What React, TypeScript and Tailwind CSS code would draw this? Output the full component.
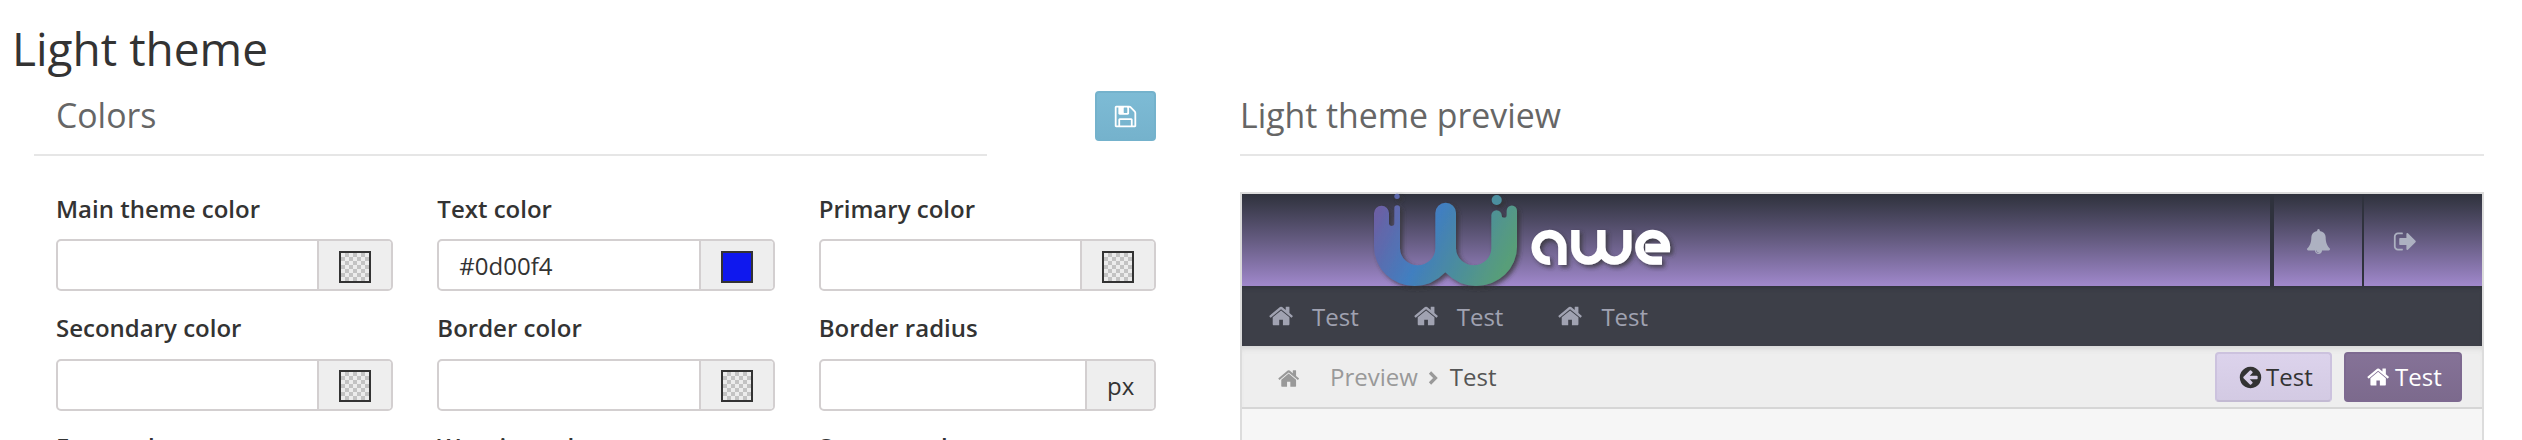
import React from "react";

const icons = {
  home: "M1408 992v480q0 26-19 45t-45 19h-384v-384h-256v384h-384q-26 0-45-19t-19-45v-480q0-1 .5-3t.5-3l575-474 575 474q1 2 1 6zm223-69l-62 74q-8 9-21 11h-3q-13 0-21-7l-692-577-692 577q-12 8-24 7-13-2-21-11l-62-74q-8-10-7-23.5t11-21.5l719-599q32-26 76-26t76 26l244 204v-195q0-14 9-23t23-9h192q14 0 23 9t9 23v408l219 182q10 8 11 21.5t-7 23.5z",
  bell: "M912 1696q0-16-16-16-59 0-101.5-42.5t-42.5-101.5q0-16-16-16t-16 16q0 73 51.5 124.5t124.5 51.5q16 0 16-16zm816-288q0 52-38 90t-90 38h-448q0 106-75 181t-181 75-181-75-75-181h-448q-52 0-90-38t-38-90q50-42 91-88t85-119.5 74.5-158.5 50-206 19.5-260q0-152 117-282.5t307-158.5q-8-19-8-39 0-40 28-68t68-28 68 28 28 68q0 20-8 39 190 28 307 158.5t117 282.5q0 139 19.5 260t50 206 74.5 158.5 85 119.5 91 88z",
  save: "M512 1536h768v-384h-768v384zm896 0h128v-896q0-14-10-38.5t-20-34.5l-281-281q-10-10-34-20t-39-10v416q0 40-28 68t-68 28h-576q-40 0-68-28t-28-68v-416h-128v1280h128v-416q0-40 28-68t68-28h832q40 0 68 28t28 68v416zm-384-928v-320q0-13-9.5-22.5t-22.5-9.5h-192q-13 0-22.5 9.5t-9.5 22.5v320q0 13 9.5 22.5t22.5 9.5h192q13 0 22.5-9.5t9.5-22.5zm640 32v928q0 40-28 68t-68 28h-1344q-40 0-68-28t-28-68v-1344q0-40 28-68t68-28h928q40 0 88 20t76 48l280 280q28 28 48 76t20 88z",
  signOut: "M704 1440q0 4 1 20t.5 26.5-3 23.5-10 19.5-20.5 6.5h-320q-119 0-203.5-84.5t-84.5-203.5v-704q0-119 84.5-203.5t203.5-84.5h320q13 0 22.5 9.5t9.5 22.5q0 4 1 20t.5 26.5-3 23.5-10 19.5-20.5 6.5h-320q-66 0-113 47t-47 113v704q0 66 47 113t113 47h312l11.5 1 11.5 3 8 5.5 7 9 2 13.5zm928-544q0 26-19 45l-544 544q-19 19-45 19t-45-19-19-45v-288h-448q-26 0-45-19t-19-45v-384q0-26 19-45t45-19h448v-288q0-26 19-45t45-19 45 19l544 544q19 19 19 45z",
  back: "M1408 960v-128q0-26-19-45t-45-19h-502l189-189q19-19 19-45t-19-45l-91-91q-18-18-45-18t-45 18l-362 362-91 91q-18 18-18 45t18 45l91 91 362 362q18 18 45 18t45-18l91-91q18-18 18-45t-18-45l-189-189h502q26 0 45-19t19-45zm256-64q0 209-103 385.5t-279.5 279.5-385.5 103-385.5-103-279.5-279.5-103-385.5 103-385.5 279.5-279.5 385.5-103 385.5 103 279.5 279.5 103 385.5z",
};

function Icon({ name, className }: { name: keyof typeof icons; className: string }) {
  return (
    <svg viewBox="0 0 1792 1792" fill="currentColor" className={`shrink-0 ${className}`}>
      <path d={icons[name]} />
    </svg>
  );
}

function Swatch({ color }: { color?: string }) {
  return (
    <svg width="32" height="32" className="shrink-0">
      <defs>
        <pattern id="checker" x="2" y="2" width="8" height="8" patternUnits="userSpaceOnUse">
          <rect width="8" height="8" fill="#ececec" />
          <rect x="4" width="4" height="4" fill="#c3c3c3" />
          <rect y="4" width="4" height="4" fill="#c3c3c3" />
        </pattern>
      </defs>
      <rect x="1" y="1" width="30" height="30" fill={color ?? "url(#checker)"} stroke="#333" strokeWidth="2" />
    </svg>
  );
}

type FieldProps = { label: string; value?: string; swatch?: string; unit?: string };

function Field({ label, value, swatch, unit }: FieldProps) {
  return (
    <div className="h-[119.2px]">
      <div className="h-[50.35px] text-[24px] leading-[39px] font-semibold text-[#333]">{label}</div>
      <div className="flex h-[52px] overflow-hidden rounded-[5px] border-2 border-[#d3cfd0] bg-white">
        <div className="flex-1 pl-[20px] text-[24px] leading-[49px] text-[#333]">{value}</div>
        {unit ? (
          <div className="w-[69px] border-l-2 border-[#d3cfd0] bg-[#eee] pl-[20px] text-[24px] leading-[50px] text-[#333]">{unit}</div>
        ) : (
          <div className="flex w-[74px] border-l-2 border-[#d3cfd0] bg-[#eee] pt-[9.8px] pl-[20px]">
            <Swatch color={swatch} />
          </div>
        )}
      </div>
    </div>
  );
}

const fields: FieldProps[] = [
  { label: "Main theme color" },
  { label: "Text color", value: "#0d00f4", swatch: "#0f18ee" },
  { label: "Primary color" },
  { label: "Secondary color" },
  { label: "Border color" },
  { label: "Border radius", unit: "px" },
  { label: "Error color" },
  { label: "Warning color" },
  { label: "Success color" },
];

function Logo() {
  return (
    <svg width="340" height="92" viewBox="0 42 1020 276" className="ml-[108px] shrink-0 overflow-visible">
      <defs>
        <linearGradient id="wave" gradientUnits="userSpaceOnUse" x1="70" y1="110" x2="450" y2="290">
          <stop offset="0" stopColor="#6c5fa3" />
          <stop offset="0.42" stopColor="#417fc0" />
          <stop offset="0.5" stopColor="#4482b4" />
          <stop offset="1" stopColor="#589e79" />
        </linearGradient>
        <filter id="shade" x="-10%" y="-10%" width="125%" height="130%">
          <feDropShadow dx="8" dy="8" stdDeviation="6" floodColor="#333" floodOpacity="0.75" />
        </filter>
      </defs>
      <g filter="url(#shade)">
        <path
          fill="url(#wave)"
          d="M72 100a22 22 0 0 1 45 0v30a8 8 0 0 0 16 0V84a8 8 0 0 1 17 0V205a53 51 0 0 0 106 0V99a31 31 0 0 1 62 0V205a53 51 0 0 0 106 0V106a15 15 0 0 1 31 0a7 7 0 0 0 15 0V92a15 15 0 0 1 31 0V200a123 118 0 0 1 -123 118q-52 0 -92 -41q-40 41 -92 41a122 118 0 0 1 -122 -118Z"
        />
        <circle cx="141" cy="49" r="8" fill="#5c68ab" />
        <circle cx="440" cy="60" r="15" fill="#4b8f9f" />
      </g>
      <g filter="url(#shade)" fill="none" stroke="#fff" strokeWidth="25">
        <path d="M600 242a40 40 0 1 1 37 -40V255" />
        <path d="M676 150V202a39 40 0 0 0 78 0V150V202a39 40 0 0 0 78 0V150" />
        <path d="M936 242H910a40 40 0 1 1 38 -38H886" />
      </g>
    </svg>
  );
}

export default function App() {
  return (
    <div className="flex h-[440px] w-[2522px] overflow-hidden bg-white font-['Open_Sans',sans-serif]">
      <section className="w-[1240px] shrink-0">
        <h1 className="h-[91px] pt-[17px] pl-[12px] text-[46px] leading-[63px] text-[#333]">Light theme</h1>
        <div className="flex h-[65px]">
          <h2 className="ml-[34px] w-[953px] border-b-2 border-[#e6e6e6] pl-[22px] text-[33.8px] leading-[48px] text-[#666]">Colors</h2>
          <button className="ml-[108px] flex h-[50px] w-[61px] items-center justify-center rounded-[4px] border-2 border-[#74b2cc] bg-linear-to-b from-[#7dbbd5] to-[#75b2cc] text-white">
            <Icon name="save" className="size-[25px]" />
          </button>
        </div>
        <div className="ml-[56px] grid w-[1100px] grid-cols-3 gap-x-[44px] pt-[33px]">
          {fields.map((f) => (
            <Field key={f.label} {...f} />
          ))}
        </div>
      </section>

      <section className="w-[1244px] shrink-0 pt-[91px]">
        <h2 className="h-[65px] w-[1244px] border-b-2 border-[#e6e6e6] text-[33.8px] leading-[48px] text-[#666]">Light theme preview</h2>
        <div className="mt-[36px] h-[300px] border-2 border-[#dcdcdc] bg-[#f6f6f6]">
          <header className="flex h-[92px] bg-linear-to-b from-[#2f323d] to-[#a088cc]">
            <Logo />
            <div className="ml-auto flex w-[92px] items-center border-l-4 border-[#2f323d] pt-[3px] pl-[32px] text-[#adb1c1]">
              <Icon name="bell" className="size-[25px]" />
            </div>
            <div className="flex w-[120px] items-center border-l-2 border-[#2f323d] pt-[3px] pl-[29px] text-[#adb1c1]">
              <Icon name="signOut" className="size-[25px]" />
            </div>
          </header>
          <nav className="flex h-[60px] bg-[#3d3f48] pl-[27px] text-[24px] text-[#a0a2b1] shadow-[inset_0_4px_4px_-2px_#2f323d]">
            {[0, 1, 2].map((n) => (
              <div key={n} className="flex w-[144.7px] leading-[61px]">
                <Icon name="home" className="mt-[17px] size-[26px]" />
                <span className="ml-[17px]">Test</span>
              </div>
            ))}
          </nav>
          <div className="flex h-[63px] border-b-2 border-[#d6d6d6] bg-[#eee] pl-[36px] text-[24px] leading-[61px] text-[#999] shadow-[inset_0_6px_6px_-4px_#d0d0d0]">
            <Icon name="home" className="mt-[21px] size-[23px]" />
            <span className="ml-[29px]">Preview</span>
            <svg width="10" height="14" viewBox="0 0 10 14" className="mt-[25px] ml-[10px]" fill="none" stroke="currentColor" strokeWidth="3.2">
              <path d="M2 1.5L7.5 7L2 12.5" />
            </svg>
            <span className="ml-[12px] text-[#555]">Test</span>
            <div className="ml-auto flex gap-[12px] pt-[6px] pr-[20px]">
              <button className="flex h-[50px] w-[117px] items-center rounded-[4px] border-2 border-b-[#c3bad3] border-[#ccc2de] bg-linear-to-b from-[#dcd3ec] to-[#d3cae3] pl-[21px] leading-[48px] text-[#333]">
                <Icon name="back" className="size-[25px]" />
                <span className="-mt-px ml-[3px]">Test</span>
              </button>
              <button className="flex h-[50px] w-[118px] items-center rounded-[4px] border-2 border-[#7d6990] bg-linear-to-b from-[#857297] to-[#7c6a8d] pl-[21px] leading-[48px] text-white">
                <Icon name="home" className="size-[24px]" />
                <span className="-mt-px ml-[4px]">Test</span>
              </button>
            </div>
          </div>
        </div>
      </section>
    </div>
  );
}
